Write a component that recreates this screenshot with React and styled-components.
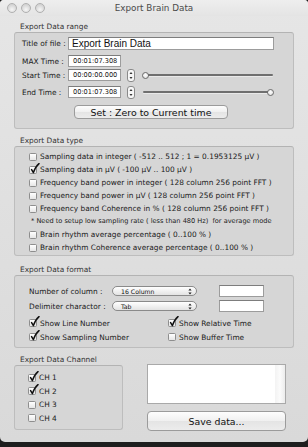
import React from "react";
import styled, { createGlobalStyle } from "styled-components";

const GlobalStyle = createGlobalStyle`
  html, body {
    margin: 0;
    padding: 0;
    background: #1e1e1e;
  }
  body {
    width: 308px;
    height: 447px;
    overflow: hidden;
    font-family: "DejaVu Sans", "Liberation Sans", sans-serif;
    color: #1a1a1a;
  }
`;

const Window = styled.div`
  width: 308px;
  height: 442px;
  background: linear-gradient(#e6e6e6, #dedede 60%, #d9d9d9);
  border-radius: 4px 4px 5px 5px;
  display: flex;
  flex-direction: column;
`;

const TitleBar = styled.div`
  height: 16px;
  display: grid;
  grid-template-columns: 1fr auto 1fr;
  align-items: center;
  border-radius: 4px 4px 0 0;
  background: linear-gradient(#eeeeee, #e4e4e4);
`;

const Lights = styled.div`
  display: flex;
  gap: 4px;
  padding-left: 7px;
`;

const Light = styled.span`
  width: 10px;
  height: 10px;
  box-sizing: border-box;
  border-radius: 50%;
  border: 1px solid #b0b0b0;
  background: radial-gradient(circle at 50% 70%, #f6f6f6, #d4d4d4 70%);
`;

const Title = styled.div`
  font-size: 8.8px;
  color: #4a4a4a;
`;

const Content = styled.div`
  padding: 6px 14px 0;
  display: flex;
  flex-direction: column;
`;

const Section = styled.div`
  margin-top: ${(p) => p.$top || 0}px;
  width: ${(p) => (p.$width ? `${p.$width}px` : "auto")};
`;

const SectionLabel = styled.div`
  height: 10px;
  line-height: 10px;
  padding-left: 6px;
  font-size: 7.4px;
  color: #333;
`;

const Box = styled.div`
  box-sizing: border-box;
  height: ${(p) => p.$height}px;
  padding: ${(p) => p.$pad};
  background: #d6d6d6;
  border: 1px solid #bdbdbd;
  border-top-color: #b3b3b3;
  border-radius: 3px;
  display: flex;
  flex-direction: column;
`;

const FieldRow = styled.div`
  display: flex;
  align-items: center;
  height: ${(p) => p.$h || 12}px;
  margin-top: ${(p) => p.$top || 0}px;
`;

const FieldLabel = styled.span`
  width: ${(p) => p.$w}px;
  flex: none;
  font-size: 7.4px;
  color: #1a1a1a;
`;

const TextField = styled.div`
  box-sizing: border-box;
  width: ${(p) => p.$w}px;
  height: 100%;
  background: #fff;
  border: 1px solid #9c9c9c;
  border-top-color: #7d7d7d;
  padding-left: ${(p) => (p.$big ? 3 : 4)}px;
  font-family: ${(p) => (p.$big ? '"Liberation Sans", Arial, sans-serif' : "inherit")};
  font-size: ${(p) => (p.$big ? 10 : 6.6)}px;
  line-height: ${(p) => (p.$big ? 11 : 10)}px;
  color: #111;
  white-space: nowrap;
`;

const StepperBox = styled.svg`
  flex: none;
  margin-left: 6px;
`;

const Slider = styled.div`
  position: relative;
  flex: 1;
  margin: 0 20px 0 8px;
  height: 8px;
  display: flex;
  align-items: center;
`;

const Track = styled.div`
  width: 100%;
  height: 2px;
  border-radius: 1px;
  background: #6f6f6f;
  box-shadow: 0 1px 0 #e9e9e9;
`;

const Thumb = styled.span`
  position: absolute;
  top: 0.5px;
  left: ${(p) => (p.$end ? "calc(100% - 6px)" : "-1px")};
  width: 7px;
  height: 7px;
  box-sizing: border-box;
  border-radius: 50%;
  border: 1px solid #6b6b6b;
  background: radial-gradient(circle at 50% 40%, #ffffff, #dadada);
`;

const PushButton = styled.button`
  box-sizing: border-box;
  width: ${(p) => p.$w}px;
  height: ${(p) => p.$h}px;
  margin-top: ${(p) => p.$top || 0}px;
  margin-left: ${(p) => p.$left || 0}px;
  padding: 0;
  border: 1px solid #9b9b9b;
  border-radius: 4px;
  background: linear-gradient(#fdfdfd, #f0f0f0 50%, #e4e4e4 51%, #ececec);
  font-family: "DejaVu Sans", sans-serif;
  font-size: ${(p) => p.$font}px;
  color: #111;
`;

const CheckList = styled.div`
  display: flex;
  flex-direction: column;
`;

const CheckRow = styled.label`
  display: flex;
  align-items: center;
  height: ${(p) => p.$h || 13}px;
  gap: 3px;
  font-size: 7.4px;
  color: #1a1a1a;
  white-space: nowrap;
`;

const Box8 = styled.span`
  position: relative;
  flex: none;
  width: 8px;
  height: 8px;
  box-sizing: border-box;
  border: 1px solid #8e8e8e;
  border-radius: 1.5px;
  background: linear-gradient(#ffffff, #e6e6e6);
`;

const Tick = styled.svg`
  position: absolute;
  left: 0px;
  top: -4px;
`;

const Note = styled.div`
  height: 13px;
  line-height: 13px;
  padding-left: 2px;
  font-size: 6.6px;
  color: #1a1a1a;
  white-space: nowrap;
`;

const FormatGrid = styled.div`
  display: grid;
  grid-template-columns: 139px 1fr;
  margin-top: 4px;
`;

const Popup = styled.div`
  box-sizing: border-box;
  width: 85px;
  height: 10px;
  margin-right: 22px;
  border: 1px solid #8a8a8a;
  border-radius: 5px;
  background: linear-gradient(#ffffff, #f1f1f1 50%, #e3e3e3);
  display: flex;
  align-items: center;
  justify-content: space-between;
  padding: 0 4px 0 8px;
  font-size: 6.2px;
  color: #111;
`;

const BottomRow = styled.div`
  display: flex;
  margin-top: 7px;
`;

const RightColumn = styled.div`
  display: flex;
  flex-direction: column;
  margin: 9px 0 0 24px;
  width: 139px;
`;

const ListArea = styled.div`
  box-sizing: border-box;
  height: 40px;
  background: #fff;
  border: 1px solid #a9a9a9;
  display: flex;
  justify-content: flex-end;
`;

const ScrollTrough = styled.div`
  width: 10px;
  background: linear-gradient(90deg, #f3f3f3, #fbfbfb 50%, #ececec);
`;

const Check = ({ on, children, h }) => (
  <CheckRow $h={h}>
    <Box8>
      {on && (
        <Tick width="10" height="11" viewBox="0 0 10 11">
          <path d="M1.6 6.6 L3.4 9.6 C4.6 6 6.4 2.8 9 0.6" fill="none" stroke="#111" strokeWidth="1.5" strokeLinecap="round" strokeLinejoin="round" />
        </Tick>
      )}
    </Box8>
    {children}
  </CheckRow>
);

const Stepper = () => (
  <StepperBox width="8" height="13" viewBox="0 0 8 13">
    <rect x="0.5" y="0.5" width="7" height="12" rx="2.5" fill="#f6f6f6" stroke="#8a8a8a" />
    <path d="M4 3 L5.5 5 L2.5 5 Z M4 10 L5.5 8 L2.5 8 Z" fill="#333" />
  </StepperBox>
);

const Arrows = () => (
  <svg width="4" height="7" viewBox="0 0 4 7">
    <path d="M2 0.5 L3.6 2.6 L0.4 2.6 Z M2 6.5 L3.6 4.4 L0.4 4.4 Z" fill="#222" />
  </svg>
);

const dataTypes = [
  { text: "Sampling data in integer ( -512 .. 512 ; 1 = 0.1953125 µV )", on: false },
  { text: "Sampling data in µV ( -100 µV .. 100 µV )", on: true },
  { text: "Frequency band power in integer ( 128 column 256 point FFT )", on: false },
  { text: "Frequency band power in µV ( 128 column 256 point FFT )", on: false },
  { text: "Frequency band Coherence in % ( 128 column 256 point FFT )", on: false },
];

const channels = [
  { name: "CH 1", on: true },
  { name: "CH 2", on: true },
  { name: "CH 3", on: false },
  { name: "CH 4", on: false },
];

const App = () => {
  return (
    <>
      <GlobalStyle />
      <Window>
        <TitleBar>
          <Lights>
            <Light />
            <Light />
            <Light />
          </Lights>
          <Title>Export Brain Data</Title>
          <span />
        </TitleBar>

        <Content>
          <Section>
            <SectionLabel>Export Data range</SectionLabel>
            <Box $height={97} $pad="4px 0 0 7px">
              <FieldRow $h={13}>
                <FieldLabel $w={46}>Title of file :</FieldLabel>
                <TextField $w={206} $big>
                  Export Brain Data
                </TextField>
              </FieldRow>
              <FieldRow $top={5}>
                <FieldLabel $w={46}>MAX Time :</FieldLabel>
                <TextField $w={53}>00:01:07.308</TextField>
              </FieldRow>
              <FieldRow $top={2}>
                <FieldLabel $w={46}>Start Time :</FieldLabel>
                <TextField $w={53}>00:00:00.000</TextField>
                <Stepper />
                <Slider>
                  <Track />
                  <Thumb />
                </Slider>
              </FieldRow>
              <FieldRow $top={5}>
                <FieldLabel $w={46}>End Time :</FieldLabel>
                <TextField $w={53}>00:01:07.308</TextField>
                <Stepper />
                <Slider>
                  <Track />
                  <Thumb $end />
                </Slider>
              </FieldRow>
              <PushButton $w={154} $h={14} $top={7} $left={52} $font={9.4}>
                Set : Zero to Current time
              </PushButton>
            </Box>
          </Section>

          <Section $top={7}>
            <SectionLabel>Export Data type</SectionLabel>
            <Box $height={110} $pad="3px 0 0 14px">
              <CheckList>
                {dataTypes.map((item) => (
                  <Check key={item.text} on={item.on}>
                    {item.text}
                  </Check>
                ))}
                <Note>* Need to setup low sampling rate ( less than 480 Hz)&nbsp; for average mode</Note>
                <Check>Brain rhythm average percentage ( 0..100 % )</Check>
                <Check>Brain rhythm Coherence average percentage ( 0..100 % )</Check>
              </CheckList>
            </Box>
          </Section>

          <Section $top={9}>
            <SectionLabel>Export Data format</SectionLabel>
            <Box $height={73} $pad="9px 0 0 14px">
              <FieldRow>
                <FieldLabel $w={83}>Number of column :</FieldLabel>
                <Popup>
                  16 Column
                  <Arrows />
                </Popup>
                <TextField $w={45} />
              </FieldRow>
              <FieldRow $top={3}>
                <FieldLabel $w={83}>Delimiter charactor :</FieldLabel>
                <Popup>
                  Tab
                  <Arrows />
                </Popup>
                <TextField $w={45} />
              </FieldRow>
              <FormatGrid>
                <Check on h={14}>Show Line Number</Check>
                <Check on h={14}>Show Relative Time</Check>
                <Check on h={14}>Show Sampling Number</Check>
                <Check h={14}>Show Buffer Time</Check>
              </FormatGrid>
            </Box>
          </Section>

          <BottomRow>
            <Section $width={109}>
              <SectionLabel>Export Data Channel</SectionLabel>
              <Box $height={65} $pad="5px 0 0 13px">
                <CheckList>
                  {channels.map((ch) => (
                    <Check key={ch.name} on={ch.on} h={13.5}>
                      {ch.name}
                    </Check>
                  ))}
                </CheckList>
              </Box>
            </Section>
            <RightColumn>
              <ListArea>
                <ScrollTrough />
              </ListArea>
              <PushButton $w={139} $h={20} $top={7} $font={9.4}>
                Save data...
              </PushButton>
            </RightColumn>
          </BottomRow>
        </Content>
      </Window>
    </>
  );
};

export default App;
